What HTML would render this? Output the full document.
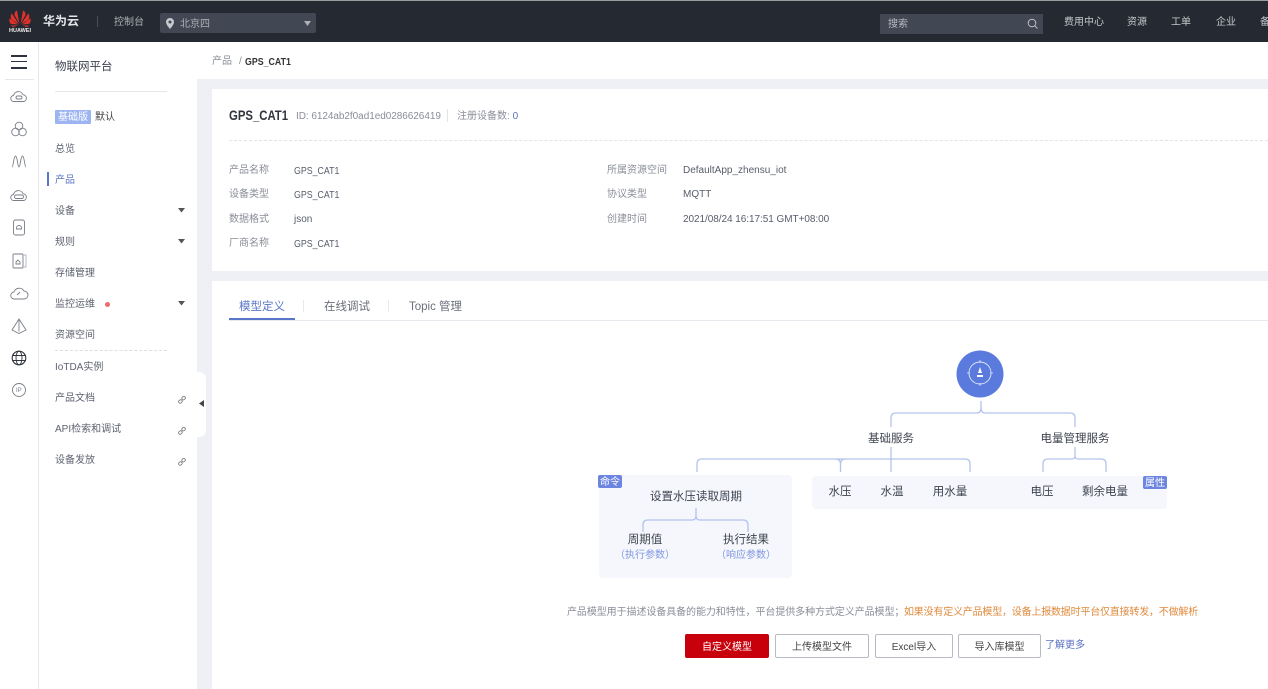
<!DOCTYPE html>
<html lang="zh-CN">
<head>
<meta charset="utf-8">
<title>GPS_CAT1</title>
<style>
html{background:#eff0f5}
html,body{margin:0;padding:0;width:1268px;height:689px;overflow:hidden}
body{background:#eff0f5;font-family:"Liberation Sans","Noto Sans CJK SC",sans-serif;color:#555;filter:blur(.3px)}
.b{position:absolute}
.t{position:absolute;white-space:nowrap;line-height:14px;height:14px;font-size:10px;color:#575d6c}
.c{transform:translateX(-50%)}
.g{font-size:10.5px;transform:scaleX(.84);transform-origin:left center}
.l{font-size:11.5px;color:#3f4450}
.btn{position:absolute;top:634px;height:22px;line-height:25px;text-align:center;font-size:10px;border:1px solid #b8bbc3;background:#fff;color:#444;border-radius:2px;box-sizing:content-box}
svg{position:absolute;overflow:visible}
</style>
</head>
<body>
<!-- top bar -->
<div class="b" style="left:0;top:0;width:1268px;height:42px;background:#252932"></div>
<div class="b" style="left:0;top:0;width:1268px;height:1px;background:#9a9ca0"></div>
<svg style="left:8px;top:8px" width="24" height="26" viewBox="0 0 24 26">
<g fill="#e0322b">
<path d="M11.4 15.5 9 2.500c-1.800.6-2.900 2.600-2.400 4.700z"/>
<path d="M12.600 15.500 15 2.500c1.800.6 2.900 2.600 2.400 4.700z"/>
<path d="M10.800 16 3.800 5.500C2.300 7.300 2.400 10.600 3.800 12z"/>
<path d="M13.200 16l7-10.500c1.500 1.800 1.400 5.100 0 6.500z"/>
<path d="M10 16.500 1.500 10.500c-.5 2 .2 4.600 1.500 5.400z"/>
<path d="M14 16.500l8.500-6c.5 2-.2 4.600-1.500 5.400z"/>
<path d="M9.500 17.500H2.800c.7 1.200 2.500 1.800 4 1z"/>
<path d="M14.500 17.500h6.700c-.7 1.200-2.500 1.800-4 1z"/>
</g>
<text x="12" y="24" font-size="5.500" font-weight="700" fill="#e8e8e8" text-anchor="middle" font-family="Liberation Sans">HUAWEI</text>
</svg>
<div class="t" style="left:43px;top:14px;font-size:12px;font-weight:700;color:#e4e5e8">华为云</div>
<div class="b" style="left:97px;top:16px;width:1px;height:11px;background:#4a4e58"></div>
<div class="t" style="left:114px;top:16px;color:#aeb0b5">控制台</div>
<div class="b" style="left:160px;top:13px;width:156px;height:20px;background:#424754;border-radius:2px"></div>
<svg style="left:165px;top:18px" width="10" height="11" viewBox="0 0 10 11"><path fill-rule="evenodd" fill="#c8cad0" d="M5 0a4 4 0 0 1 4 4c0 2.800-4 7-4 7S1 6.800 1 4a4 4 0 0 1 4-4zm0 2.500a1.500 1.500 0 1 0 0 3 1.500 1.500 0 0 0 0-3z"/></svg>
<div class="t" style="left:180px;top:18px;color:#aeb0b5">北京四</div>
<svg style="left:304px;top:21px" width="8" height="5"><path d="M0 0h7L3.500 5z" fill="#aeb0b5"/></svg>
<div class="b" style="left:880px;top:14px;width:163px;height:20px;background:#424754"></div>
<div class="t" style="left:888px;top:18px;color:#b8bac0">搜索</div>
<svg style="left:1027px;top:18px" width="12" height="12" viewBox="0 0 12 12"><circle cx="5" cy="5" r="3.800" fill="none" stroke="#c0c2c8"/><path d="M8 8l2.500 2.500" stroke="#c0c2c8"/></svg>
<div class="t" style="left:1064px;top:16px;color:#c6c8cc">费用中心</div>
<div class="t" style="left:1127px;top:16px;color:#c6c8cc">资源</div>
<div class="t" style="left:1171px;top:16px;color:#c6c8cc">工单</div>
<div class="t" style="left:1216px;top:16px;color:#c6c8cc">企业</div>
<div class="t" style="left:1260px;top:16px;color:#c6c8cc">备案</div>

<!-- icon rail -->
<div class="b" style="left:0;top:42px;width:39px;height:647px;background:#fff;border-right:1px solid #e6e7ec;box-sizing:border-box"></div>
<div class="b" style="left:11px;top:55px;width:16px;height:2px;background:#2e3240"></div>
<div class="b" style="left:11px;top:61px;width:16px;height:1px;background:#2e3240"></div>
<div class="b" style="left:11px;top:67px;width:16px;height:2px;background:#2e3240"></div>
<div class="b" style="left:5px;top:79px;width:29px;height:1px;background:#e6e7ec"></div>
<svg style="left:10px;top:90px" width="18" height="300" viewBox="0 0 18 300" fill="none" stroke="#7a7e88" stroke-width=".9">
<path d="M4 11.500a3 3 0 0 1-.5-6 5 5 0 0 1 9.500-.8 3.500 3.500 0 0 1 1 6.800z"/><rect x="6" y="6" width="6" height="3" rx="1.500"/>
<circle cx="9" cy="36" r="3.800"/><circle cx="5.500" cy="42" r="3.800"/><circle cx="12.500" cy="42" r="3.800"/>
<path d="M2 77C3.500 77 3.500 66 5.500 66S7.500 77 9 77 10.500 66 12.500 66 14.500 77 16 77"/>
<path d="M4 110.500a3 3 0 0 1-.5-6 5 5 0 0 1 9.500-.8 3.500 3.500 0 0 1 1 6.800z"/><rect x="4.500" y="105" width="9" height="3.500" rx="1.700"/>
<rect x="3.500" y="130" width="11" height="15" rx="2"/><path d="M6.500 138a2.500 2.500 0 0 1 5 0v1h-5z"/>
<rect x="3" y="164" width="10" height="14" rx="1"/><path d="M13 165h3v12h-3" stroke="#aeb5c5"/><path d="M6 172l2-2 2 2v2H6z"/>
<path d="M4.500 209a3.500 3.500 0 0 1-.5-7 5.500 5.500 0 0 1 10-1 4 4 0 0 1 0 8z"/><path d="M7 205l3-3"/>
<path d="M9 229v12.500M9 229l-7 11 7 3.500 7-3.500z"/>
<circle cx="9" cy="268" r="6.800" stroke="#30343e" stroke-width="1.100"/><ellipse cx="9" cy="268" rx="3" ry="6.800" stroke="#30343e"/><path d="M2.200 265.500h13.600M2.200 270.500h13.600" stroke="#30343e"/>
<circle cx="9" cy="300" r="6.500"/>
</svg>
<div class="t" style="left:16px;top:383.500px;font-size:6px;color:#7a7e88">IP</div>

<!-- side menu -->
<div class="b" style="left:39px;top:42px;width:158px;height:647px;background:#fff"></div>
<div class="t" style="left:55px;top:60px;font-size:11.5px;color:#3a3f4c">物联网平台</div>
<div class="b" style="left:55px;top:91px;width:112px;height:1px;background:#e6e7ec"></div>
<div class="b" style="left:55px;top:110px;width:36px;height:14px;background:#9db4f2;border-radius:1px"></div>
<div class="t" style="left:58px;top:111px;color:#fff">基础版</div>
<div class="t" style="left:95px;top:111px;color:#444">默认</div>
<div class="t" style="left:55px;top:143px;color:#5e6370">总览</div>
<div class="b" style="left:47px;top:172px;width:2px;height:14px;background:#5a76c8"></div>
<div class="t" style="left:55px;top:174px;color:#5e77c0">产品</div>
<div class="t" style="left:55px;top:205px;color:#5e6370">设备</div>
<div class="t" style="left:55px;top:236px;color:#5e6370">规则</div>
<div class="t" style="left:55px;top:267px;color:#5e6370">存储管理</div>
<div class="t" style="left:55px;top:298px;color:#5e6370">监控运维</div>
<div class="b" style="left:105px;top:302px;width:5px;height:5px;border-radius:50%;background:#ee6b6b"></div>
<div class="t" style="left:55px;top:329px;color:#5e6370">资源空间</div>
<div class="b" style="left:55px;top:350px;width:112px;border-top:1px dashed #dcdde2"></div>
<div class="t" style="left:55px;top:361px;color:#5e6370">IoTDA实例</div>
<div class="t" style="left:55px;top:392px;color:#5e6370">产品文档</div>
<div class="t" style="left:55px;top:423px;color:#5e6370">API检索和调试</div>
<div class="t" style="left:55px;top:454px;color:#5e6370">设备发放</div>
<svg style="left:178px;top:208px" width="7" height="5"><path d="M0 0h7L3.500 4.500z" fill="#555"/></svg>
<svg style="left:178px;top:239px" width="7" height="5"><path d="M0 0h7L3.500 4.500z" fill="#555"/></svg>
<svg style="left:178px;top:301px" width="7" height="5"><path d="M0 0h7L3.500 4.500z" fill="#555"/></svg>
<svg style="left:178px;top:396px" width="8" height="8" viewBox="0 0 8 8" fill="none" stroke="#777" stroke-width=".8"><rect x="3.800" y=".6" width="3.600" height="3" rx="1.400" transform="rotate(-40 5.600 2.100)"/><rect x=".6" y="4" width="3.600" height="3" rx="1.400" transform="rotate(-40 2.400 5.500)"/></svg>
<svg style="left:178px;top:427px" width="8" height="8" viewBox="0 0 8 8" fill="none" stroke="#777" stroke-width=".8"><rect x="3.800" y=".6" width="3.600" height="3" rx="1.400" transform="rotate(-40 5.600 2.100)"/><rect x=".6" y="4" width="3.600" height="3" rx="1.400" transform="rotate(-40 2.400 5.500)"/></svg>
<svg style="left:178px;top:458px" width="8" height="8" viewBox="0 0 8 8" fill="none" stroke="#777" stroke-width=".8"><rect x="3.800" y=".6" width="3.600" height="3" rx="1.400" transform="rotate(-40 5.600 2.100)"/><rect x=".6" y="4" width="3.600" height="3" rx="1.400" transform="rotate(-40 2.400 5.500)"/></svg>
<div class="b" style="left:196px;top:372px;width:10px;height:65px;background:#fff;border-radius:0 7px 7px 0"></div>
<svg style="left:199px;top:400px" width="5" height="7"><path d="M5 0v7L0 3.500z" fill="#444"/></svg>

<!-- breadcrumb -->
<div class="b" style="left:197px;top:42px;width:1071px;height:37px;background:#fff"></div>
<div class="t" style="left:212px;top:55px;color:#8a8e99">产品</div>
<div class="t" style="left:239px;top:55px;color:#8a8e99">/</div>
<div class="t g" style="left:245px;top:55px;font-weight:700;color:#333">GPS_CAT1</div>

<!-- info card -->
<div class="b" style="left:212px;top:89px;width:1056px;height:182px;background:#fff"></div>
<div class="t" style="left:229px;top:107px;font-size:14px;height:16px;line-height:16px;font-weight:700;color:#30343e;transform:scaleX(.81);transform-origin:left center">GPS_CAT1</div>
<div class="t" style="left:296px;top:110px;color:#8a8e99;letter-spacing:-.05px">ID: 6124ab2f0ad1ed0286626419</div>
<div class="b" style="left:447px;top:109px;width:1px;height:13px;background:#e2e3e8"></div>
<div class="t" style="left:457px;top:110px;color:#8a8e99">注册设备数: <span style="color:#5a72b8">0</span></div>
<div class="b" style="left:229px;top:140px;width:1039px;border-top:1px dashed #e2e3e8"></div>

<div class="t" style="left:229px;top:164px;color:#8a8e99">产品名称</div>
<div class="t g" style="left:294px;top:164px">GPS_CAT1</div>
<div class="t" style="left:229px;top:188px;color:#8a8e99">设备类型</div>
<div class="t g" style="left:294px;top:188px">GPS_CAT1</div>
<div class="t" style="left:229px;top:213px;color:#8a8e99">数据格式</div>
<div class="t" style="left:294px;top:213px">json</div>
<div class="t" style="left:229px;top:237px;color:#8a8e99">厂商名称</div>
<div class="t g" style="left:294px;top:237px">GPS_CAT1</div>
<div class="t" style="left:607px;top:164px;color:#8a8e99">所属资源空间</div>
<div class="t" style="left:683px;top:164px">DefaultApp_zhensu_iot</div>
<div class="t" style="left:607px;top:188px;color:#8a8e99">协议类型</div>
<div class="t" style="left:683px;top:188px">MQTT</div>
<div class="t" style="left:607px;top:213px;color:#8a8e99">创建时间</div>
<div class="t" style="left:683px;top:213px;letter-spacing:-.05px">2021/08/24 16:17:51 GMT+08:00</div>

<!-- tab card -->
<div class="b" style="left:212px;top:281px;width:1056px;height:408px;background:#fff"></div>
<div class="b" style="left:229px;top:320px;width:1039px;height:1px;background:#e8e9ee"></div>
<div class="b" style="left:229px;top:318px;width:66px;height:2px;background:#5a76c8"></div>
<div class="t" style="left:239px;top:300px;font-size:11.5px;color:#5a76c8">模型定义</div>
<div class="b" style="left:303px;top:300px;width:1px;height:12px;background:#e8e9ee"></div>
<div class="t" style="left:324px;top:300px;font-size:11.5px;color:#6a6e79">在线调试</div>
<div class="b" style="left:388px;top:300px;width:1px;height:12px;background:#e8e9ee"></div>
<div class="t" style="left:409px;top:300px;font-size:11.5px;color:#6a6e79">Topic 管理</div>

<!-- diagram panels -->
<div class="b" style="left:599px;top:475px;width:193px;height:103px;background:#f5f7fd;border-radius:4px"></div>
<div class="b" style="left:812px;top:476px;width:355px;height:33px;background:#f5f7fd;border-radius:4px"></div>
<div class="b" style="left:598px;top:475px;width:24px;height:13px;background:#6c85e0;border-radius:2px"></div>
<div class="t" style="left:600px;top:476px;color:#fff">命令</div>
<div class="b" style="left:1143px;top:476px;width:24px;height:13px;background:#6c85e0;border-radius:2px"></div>
<div class="t" style="left:1145px;top:477px;color:#fff">属性</div>

<svg style="left:0;top:0" width="1268" height="689" fill="none" stroke="#b3c3ec" stroke-width="1.300">
<path d="M981 401v6q0 6-4 6H896q-5 0-5 5v9M981 407q0 6 4 6h85q5 0 5 5v9"/>
<path d="M891 447v25M891 459H702q-5 0-5 5v8M840.500 472v-8q0-5-5-5M840.500 464q0-5 5-5M891 459h74q5 0 5 5v8"/>
<path d="M1075 447v9q0 3 3 3h23q5 0 5 5v8M1075 456q0 3-3 3h-24q-5 0-5 5v8"/>
<path d="M696 508v8q0 4-4 4h-44q-5 0-5 5v7M696 516q0 4 4 4h43q5 0 5 5v7"/>
</svg>

<!-- root node -->
<svg style="left:956px;top:350px" width="48" height="48" viewBox="0 0 48 48">
<circle cx="24" cy="24" r="23.500" fill="#5a7ade"/>
<circle cx="24" cy="23" r="11" fill="none" stroke="#dfe6fa" stroke-width=".9"/>
<path d="M24 10v3M24 33v3M11 23h3M34 23h3" stroke="#dfe6fa" stroke-width=".8"/>
<path d="M24 17l2 6h-4z" fill="#fff"/>
<path d="M21 25h6v2h-6z" fill="#fff"/>
</svg>

<!-- diagram labels -->
<div class="t c l" style="left:891px;top:432px">基础服务</div>
<div class="t c l" style="left:1075px;top:432px">电量管理服务</div>
<div class="t c l" style="left:840px;top:485px">水压</div>
<div class="t c l" style="left:892px;top:485px">水温</div>
<div class="t c l" style="left:950px;top:485px">用水量</div>
<div class="t c l" style="left:1042px;top:485px">电压</div>
<div class="t c l" style="left:1105px;top:485px">剩余电量</div>
<div class="t c l" style="left:696px;top:490px">设置水压读取周期</div>
<div class="t c l" style="left:645px;top:533px">周期值</div>
<div class="t c l" style="left:746px;top:533px">执行结果</div>
<div class="t c" style="left:645px;top:549px;font-size:10px;color:#7f97e0">（执行参数）</div>
<div class="t c" style="left:746px;top:549px;font-size:10px;color:#7f97e0">（响应参数）</div>

<!-- description -->
<div class="t" style="left:567px;top:606px;color:#8a8e99;letter-spacing:-.08px">产品模型用于描述设备具备的能力和特性，平台提供多种方式定义产品模型；</div>
<div class="t" style="left:904px;top:606px;color:#e08a3c;letter-spacing:-.2px">如果没有定义产品模型，设备上报数据时平台仅直接转发，不做解析</div>

<!-- buttons -->
<div class="btn" style="left:685px;width:82px;background:#c7000b;border-color:#c7000b;color:#fff">自定义模型</div>
<div class="btn" style="left:775px;width:92px">上传模型文件</div>
<div class="btn" style="left:875px;width:76px">Excel导入</div>
<div class="btn" style="left:958px;width:81px">导入库模型</div>
<div class="t" style="left:1045px;top:639px;color:#5a72c0">了解更多</div>
</body>
</html>
